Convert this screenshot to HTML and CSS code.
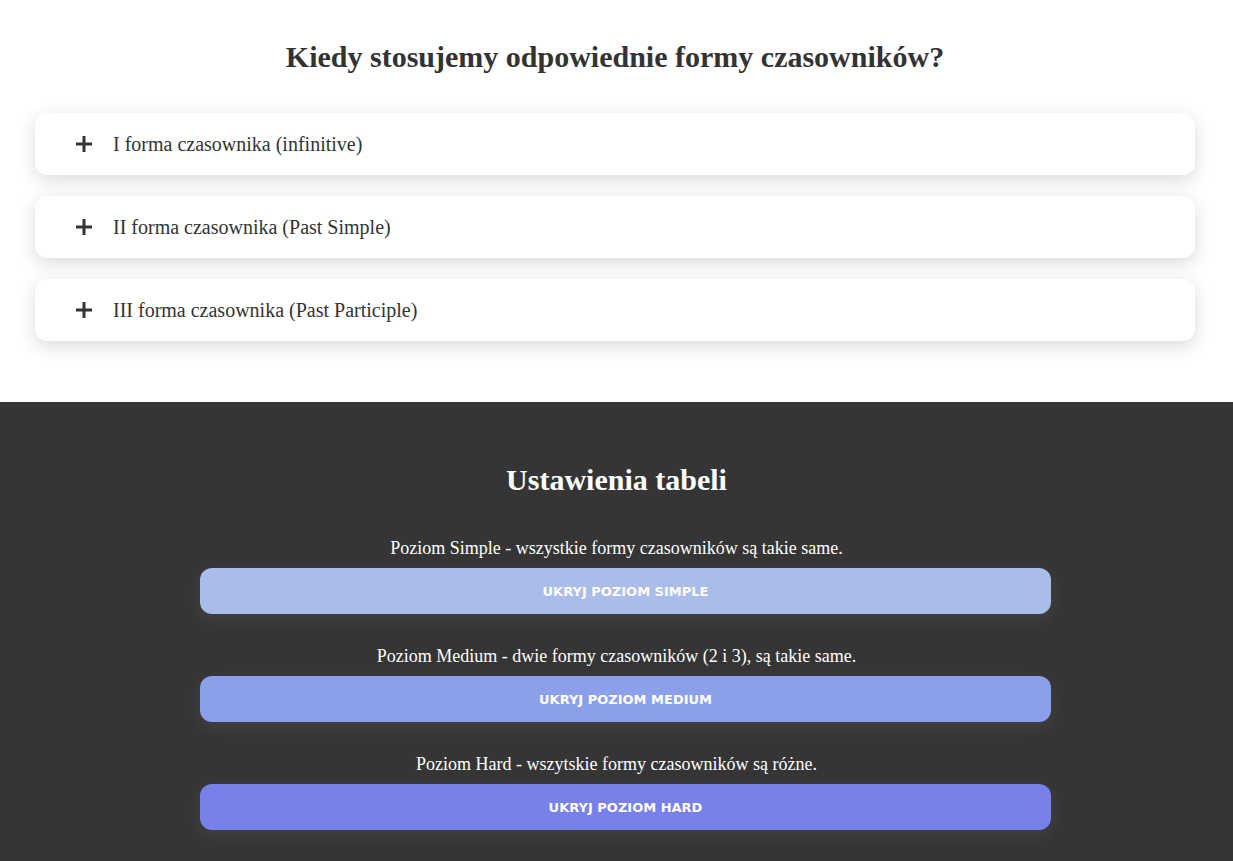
FILE: index.html
```html
<!DOCTYPE html>
<html lang="pl">
<head>
<meta charset="utf-8">
<title>Formy czasowników</title>
<link rel="stylesheet" href="styles.css">
</head>
<body>
<section class="faq">
  <h2 class="faq-title">Kiedy stosujemy odpowiednie formy czasowników?</h2>
  <div class="card">
    <svg class="plus" width="16" height="16" viewBox="0 0 16 16"><path d="M8 0v16M0 8h16" stroke="#333" stroke-width="3"/></svg>
    <span class="card-text">I forma czasownika (infinitive)</span>
  </div>
  <div class="card">
    <svg class="plus" width="16" height="16" viewBox="0 0 16 16"><path d="M8 0v16M0 8h16" stroke="#333" stroke-width="3"/></svg>
    <span class="card-text">II forma czasownika (Past Simple)</span>
  </div>
  <div class="card">
    <svg class="plus" width="16" height="16" viewBox="0 0 16 16"><path d="M8 0v16M0 8h16" stroke="#333" stroke-width="3"/></svg>
    <span class="card-text">III forma czasownika (Past Participle)</span>
  </div>
</section>
<section class="settings">
  <h2 class="settings-title">Ustawienia tabeli</h2>
  <div class="level">
    <p class="level-desc">Poziom Simple - wszystkie formy czasowników są takie same.</p>
    <button class="level-btn simple">UKRYJ POZIOM SIMPLE</button>
  </div>
  <div class="level">
    <p class="level-desc">Poziom Medium - dwie formy czasowników (2 i 3), są takie same.</p>
    <button class="level-btn medium">UKRYJ POZIOM MEDIUM</button>
  </div>
  <div class="level">
    <p class="level-desc">Poziom Hard - wszytskie formy czasowników są różne.</p>
    <button class="level-btn hard">UKRYJ POZIOM HARD</button>
  </div>
</section>
</body>
</html>
```
FILE: styles.css
```css
* { box-sizing: border-box; }
html, body {
  margin: 0;
  padding: 0;
}
body {
  font-family: "Liberation Serif", "Times New Roman", serif;
  color: #333;
  background: #fff;
}
.faq {
  padding: 38px 38px 61px 35px;
  display: flex;
  flex-direction: column;
  gap: 21px;
}
.faq-title {
  margin: 0 0 16px;
  text-align: center;
  font-size: 30px;
  line-height: 38px;
  font-weight: bold;
  color: #333;
}
.card {
  height: 62px;
  display: flex;
  align-items: center;
  gap: 21px;
  padding: 0 41px;
  background: #fff;
  border-radius: 12px;
  box-shadow: 0 5px 18px rgba(0, 0, 0, 0.15);
}
.plus { flex: none; display: block; }
.card-text {
  font-size: 20px;
  line-height: 24px;
  color: #333;
}
.settings {
  background: #353535;
  padding: 59px 0 30px;
  min-height: 459px;
}
.settings-title {
  margin: 0 0 39px;
  text-align: center;
  color: #fff;
  font-size: 30px;
  line-height: 38px;
  font-weight: bold;
}
.level {
  margin-bottom: 32px;
}
.level-desc {
  margin: 0 0 10px;
  text-align: center;
  color: #fff;
  font-size: 18px;
  line-height: 20px;
}
.level-btn {
  display: block;
  width: 851px;
  height: 46px;
  margin-left: 200px;
  border: none;
  border-radius: 12px;
  color: #fff;
  font-family: "DejaVu Sans", Verdana, sans-serif;
  font-weight: bold;
  font-size: 13px;
  box-shadow: 0 5px 16px rgba(255, 255, 255, 0.07);
  cursor: pointer;
}
.simple { background: #aabce8; }
.medium { background: #8b9fea; }
.hard { background: #7880ea; }
```
